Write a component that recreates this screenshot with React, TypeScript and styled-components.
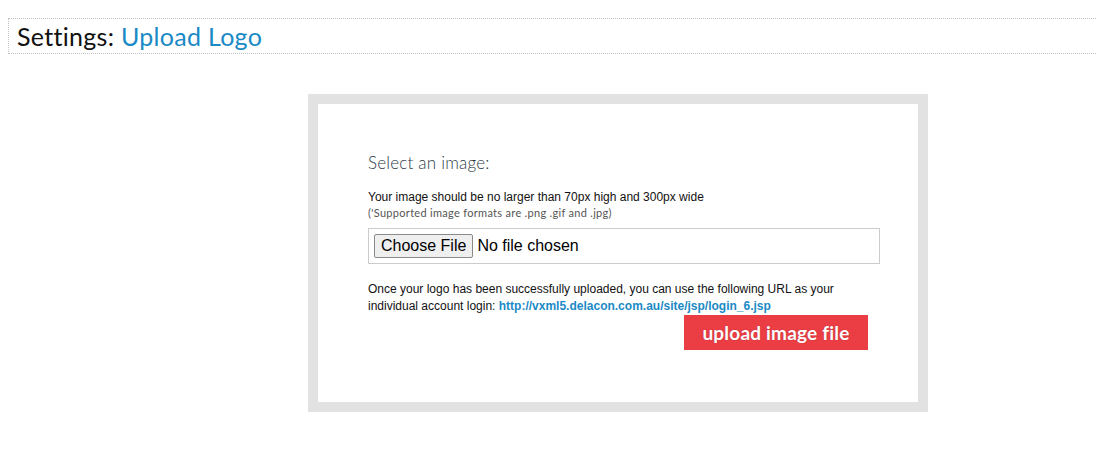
import React from "react";
import styled, { createGlobalStyle } from "styled-components";

const Global = createGlobalStyle`
  html, body { margin: 0; padding: 0; background: #fff; }
  body { margin: 8px; font-family: "Liberation Sans", Arial, sans-serif; overflow: hidden; }
`;

const Header = styled.div`
  margin-top: 10px;
  margin-right: -20px;
  height: 34px;
  border-top: 1px dotted #c4c4c4;
  border-bottom: 1px dotted #c4c4c4;
  border-left: 1px dotted #c4c4c4;
  display: flex;
  align-items: center;
  padding-left: 8px;
`;

const Title = styled.h1`
  margin: 0;
  font-family: "Lato", "Noto Sans", sans-serif;
  font-weight: 400;
  font-size: 25px;
  color: #111;
  letter-spacing: 0.3px;
`;

const Accent = styled.span`
  color: #1a8ac6;
`;

const Stage = styled.div`
  display: flex;
  padding-left: 300px;
  padding-top: 40px;
`;

const Panel = styled.div`
  width: 620px;
  box-sizing: border-box;
  border: 10px solid #e2e2e2;
  background: #fff;
  padding: 50px 38px 52px 50px;
`;

const Inner = styled.div`
  display: flex;
  flex-direction: column;
`;

const Heading = styled.h2`
  margin: 0;
  font-family: "Lato", "Noto Sans", sans-serif;
  font-weight: 300;
  font-size: 17px;
  color: #2c3a46;
  line-height: 18px;
  letter-spacing: 0.2px;
`;

const Note = styled.p`
  margin: 18px 0 0;
  font-size: 12px;
  color: #111;
  line-height: 14px;
`;

const SubNote = styled.p`
  margin: 3px 0 0;
  font-family: "Lato", "Noto Sans", sans-serif;
  font-size: 11px;
  letter-spacing: 0.3px;
  color: #555;
  line-height: 12px;
`;

const FileBox = styled.div`
  margin-top: 9px;
  border: 1px solid #cccccc;
  height: 34px;
  display: flex;
  align-items: center;
  padding-left: 5px;
`;

const FileInput = styled.input`
  font-family: "Liberation Sans", Arial, sans-serif;
  font-size: 16px;
  color: #000;
  &::file-selector-button {
    font-family: "Liberation Sans", Arial, sans-serif;
    font-size: 16px;
    background: #efefef;
    border: 1px solid #8a8a8a;
    border-radius: 2px;
    padding: 1px 6px;
    height: 24px;
    margin-right: 4px;
    color: #000;
  }
`;

const Info = styled.p`
  margin: 17px 0 0;
  font-size: 12px;
  line-height: 17px;
  color: #111;
`;

const Link = styled.a`
  color: #1a8ac6;
  font-weight: bold;
  text-decoration: none;
`;

const Actions = styled.div`
  display: flex;
  justify-content: flex-end;
  padding-right: 12px;
  margin-top: 0;
`;

const UploadButton = styled.button`
  width: 184px;
  height: 35px;
  border: none;
  background: #ea3d44;
  color: #fff;
  font-family: "Lato", "Noto Sans", sans-serif;
  font-weight: 700;
  font-size: 19px;
  letter-spacing: 0.2px;
  text-shadow: 0 0 1px rgba(0,0,0,0.25);
  cursor: pointer;
  padding: 0;
`;

export default function App() {
  return (
    <>
      <Global />
      <Header>
        <Title>
          Settings: <Accent>Upload Logo</Accent>
        </Title>
      </Header>
      <Stage>
        <Panel>
          <Inner>
            <Heading>Select an image:</Heading>
            <Note>Your image should be no larger than 70px high and 300px wide</Note>
            <SubNote>('Supported image formats are .png .gif and .jpg)</SubNote>
            <FileBox>
              <FileInput type="file" />
            </FileBox>
            <Info>
              Once your logo has been successfully uploaded, you can use the following URL as your
              individual account login:{" "}
              <Link href="#">http://vxml5.delacon.com.au/site/jsp/login_6.jsp</Link>
            </Info>
            <Actions>
              <UploadButton>upload image file</UploadButton>
            </Actions>
          </Inner>
        </Panel>
      </Stage>
    </>
  );
}
